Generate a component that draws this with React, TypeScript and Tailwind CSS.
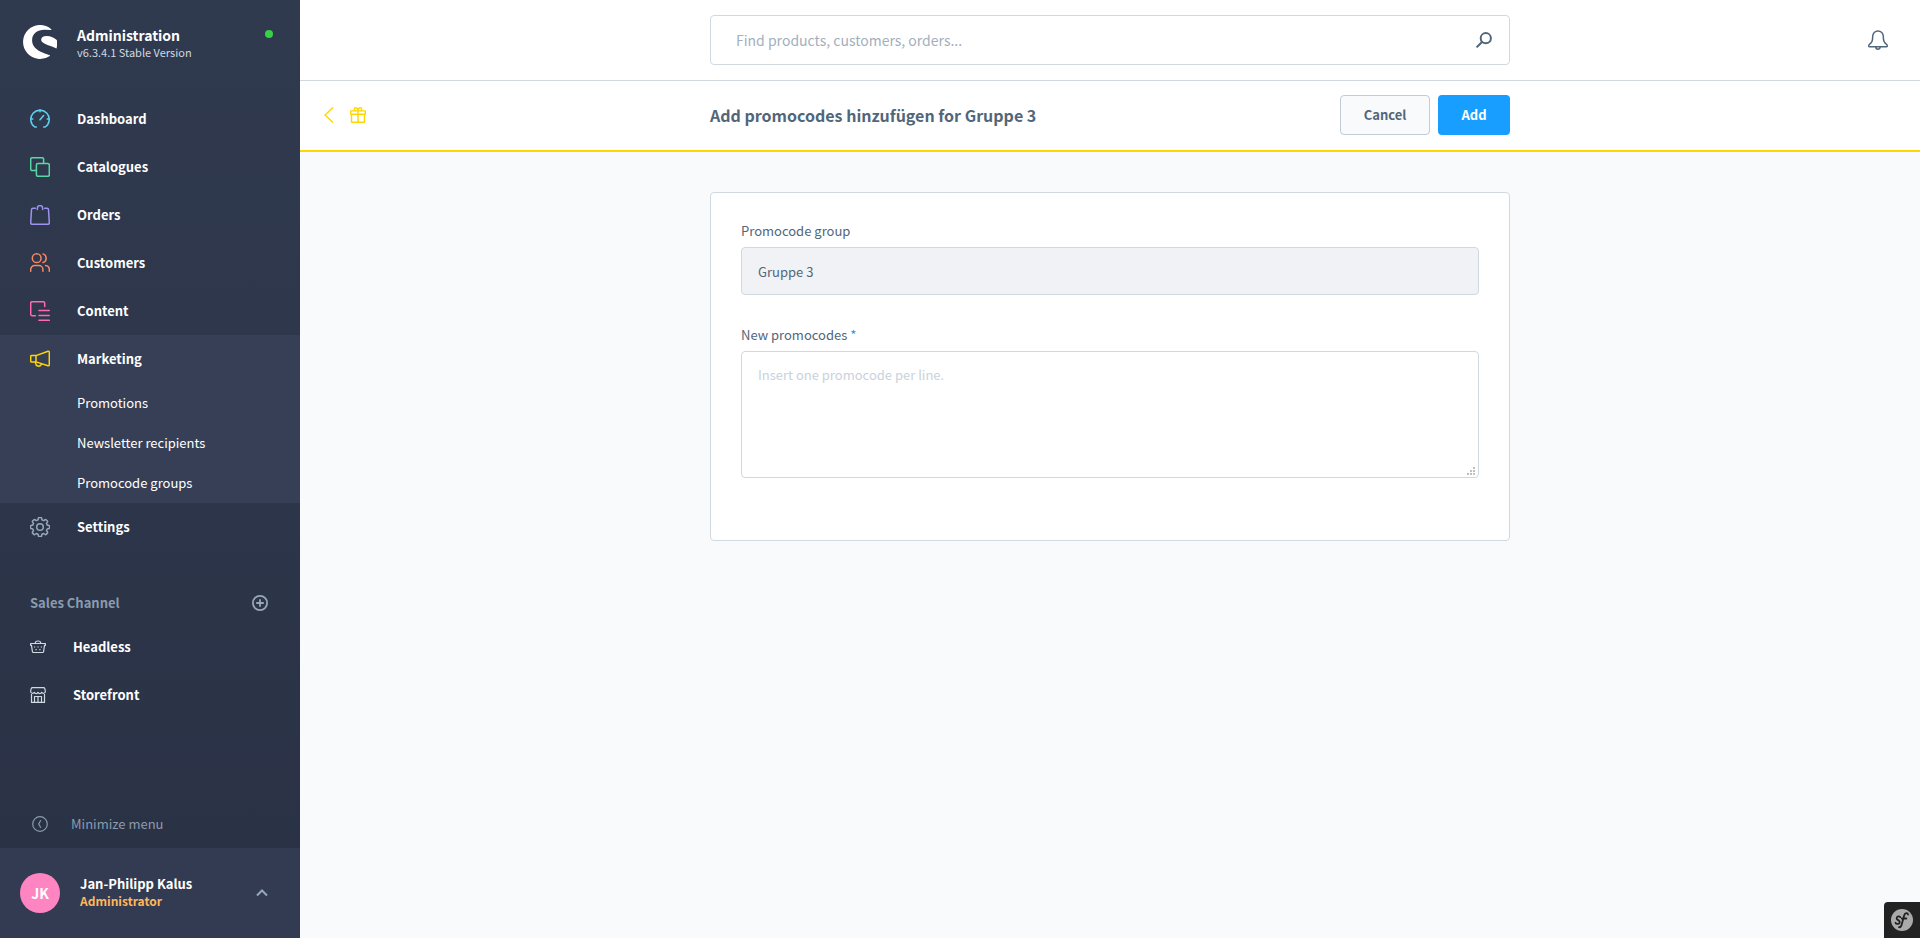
import { useState } from "react"
import type { ReactNode } from "react"

interface NavItem {
  label: string
  icon: ReactNode
  color: string
  children?: string[]
}

interface IconProps {
  size?: number
  children: ReactNode
}

function Icon({ size = 20, children }: IconProps) {
  return (
    <svg
      width={size}
      height={size}
      viewBox="0 0 20 20"
      fill="none"
      stroke="currentColor"
      strokeWidth="1.5"
      strokeLinecap="round"
      strokeLinejoin="round"
      aria-hidden="true"
      className="shrink-0"
    >
      {children}
    </svg>
  )
}

const navItems: NavItem[] = [
  {
    label: "Dashboard",
    color: "text-[#5fd0f0]",
    icon: (
      <Icon>
        <path d="M6.3 18H4.8A9.2 9.2 0 1 1 15.2 18H13.700" />
        <path d="M10 .8v2M.8 10h2M17.2 10h2M10 10.8l3.600-4.300" />
      </Icon>
    ),
  },
  {
    label: "Catalogues",
    color: "text-[#57d9a3]",
    icon: (
      <Icon>
        <path d="M6 13.600H2.200A1.500 1.500 0 0 1 .7 12.100V2.200A1.500 1.500 0 0 1 2.200.7h9.900a1.500 1.500 0 0 1 1.500 1.500V6" />
        <rect x="6.400" y="6.400" width="12.900" height="12.900" rx="1.500" />
      </Icon>
    ),
  },
  {
    label: "Orders",
    color: "text-[#a092f0]",
    icon: (
      <Icon>
        <path d="M5.300 3.300H3A1.500 1.500 0 0 0 1.500 4.800L.7 17.800a1.500 1.500 0 0 0 1.500 1.500h15.600a1.500 1.500 0 0 0 1.500-1.500L18.500 4.800A1.500 1.500 0 0 0 17 3.300h-2.300" />
        <path d="M7.300 4.600V3.300a2.700 2.700 0 0 1 5.400 0v1.300" />
      </Icon>
    ),
  },
  {
    label: "Customers",
    color: "text-[#f88962]",
    icon: (
      <Icon>
        <circle cx="6.700" cy="5.200" r="4.400" />
        <path d="M.7 18.300v-1.800a4 4 0 0 1 4-4h4.200a4 4 0 0 1 4 4v1.800M13 .9a4.500 4.500 0 0 1 0 8.600M15.600 12.600a4.200 4.200 0 0 1 3.700 4.200v1.500" />
      </Icon>
    ),
  },
  {
    label: "Content",
    color: "text-[#ff68b4]",
    icon: (
      <Icon>
        <path d="M5.400 14.700H2.200A1.500 1.500 0 0 1 .7 13.200v-11A1.500 1.500 0 0 1 2.200.7h11a1.500 1.500 0 0 1 1.500 1.500v3.200" />
        <path d="M9 9.500h10.300M9 14.500h10.300M9 19.300h10.300" />
      </Icon>
    ),
  },
  {
    label: "Marketing",
    color: "text-[#ffd700]",
    icon: (
      <Icon>
        <path d="M6 6.600 18 2.300a1 1 0 0 1 1.300.9v12.600a1 1 0 0 1-1.300.9L6 12.900ZM6 6.600H1.700a1 1 0 0 0-1 1v4.300a1 1 0 0 0 1 1H6M5.600 13v1.300a3 3 0 0 0 5.600 1.300v-.8" />
      </Icon>
    ),
    children: ["Promotions", "Newsletter recipients", "Promocode groups"],
  },
  {
    label: "Settings",
    color: "text-[#98a7b9]",
    icon: (
      <Icon>
        <path d="M8.100 2.900 8.400 1.100Q8.500.6 9 .6h2q.5 0 .6.500l.3 1.800 1.800.7 1.500-1q.5-.3.900.1l1.300 1.300q.4.400.1.900l-1 1.500.7 1.700 1.800.3q.5.100.5.600v2q0 .5-.5.600l-1.800.3-.7 1.800 1 1.500q.3.500-.1.900l-1.300 1.300q-.4.400-.9.100l-1.500-1-1.800.7-.3 1.800q-.1.500-.6.500H9q-.5 0-.6-.5l-.3-1.800-1.800-.7-1.500 1q-.5.300-.9-.1l-1.300-1.300q-.4-.4-.1-.9l1-1.500-.7-1.800-1.800-.3Q.5 11.500.5 11V9q0-.5.5-.6l1.800-.3.7-1.700-1-1.500q-.3-.5.1-.9l1.300-1.300q.4-.4.900-.1l1.500 1Z" />
        <circle cx="10" cy="10" r="3.300" />
      </Icon>
    ),
  },
]

const salesChannels = [
  {
    label: "Headless",
    icon: (
      <svg width="16" height="16" viewBox="0 0 16 16" fill="none" stroke="currentColor" strokeWidth="1.200" strokeLinejoin="round" aria-hidden="true">
        <path d="M.6 4.500h14.800v1.800h-.9l-.9 6.200q-.1 1-1.100 1h-9q-1 0-1.100-1L1.500 6.300H.6ZM5.300 4.500V4a2.700 2 0 0 1 5.400 0v.5" />
        <path d="M4 8h1.200M7.400 8h1.200M10.800 8H12M5.500 10.700h1.200M9.300 10.700h1.200" />
      </svg>
    ),
  },
  {
    label: "Storefront",
    icon: (
      <svg width="16" height="16" viewBox="0 0 16 16" fill="none" stroke="currentColor" strokeWidth="1.200" strokeLinejoin="round" aria-hidden="true">
        <path d="M1.500 7v8.400h13V7M2.500.6h11q1 0 1.300 1l.6 2.900a2 2 0 0 1-3.700.8 2 2 0 0 1-3.700 0 2 2 0 0 1-3.700 0A2 2 0 0 1 .6 4.500l.6-2.900q.3-1 1.300-1Z" />
        <path d="M4.500 15.400V9.500h7v5.900M8 9.500v5.900" />
      </svg>
    ),
  },
]

function Sidebar() {
  return (
    <aside className="flex w-[300px] shrink-0 flex-col bg-linear-to-b from-[#303a4f] to-[#2a3145] text-white">
      <div className="flex h-[95px] items-start pt-[25px] pr-[27px] pl-[23px]">
        <svg width="34" height="34" viewBox="0 0 34 34" fill="white" role="img" aria-label="Shopware" className="shrink-0">
          <path d="M28.300 4.200A17 17 0 1 0 26.800 30.900q.5-.4 0-.6C20 27.700 9.100 24.700 9.100 15.200 9.100 8.500 14.500 4.800 21.300 4.800q3.500 0 6.700.2.900-.2.300-.8Z" />
          <path d="M33.800 15c-2.500-2.300-5.800-4-10.300-4-3.500 0-5.300 1.500-5.300 3.700 0 4.100 7.600 5 14.700 8.600q.7.300.8-.5c.5-2.800.6-5 .1-7.800Z" />
        </svg>
        <div className="ml-5 flex-1 pt-px">
          <div className="text-sm leading-[18px] font-bold">Administration</div>
          <div className="text-[11px] leading-4 text-[#d1d9e0]">v6.3.4.1 Stable Version</div>
        </div>
        <span className="mt-[5px] size-2 rounded-full bg-[#37d046]" />
      </div>

      <nav className="text-[13px]">
        <ul>
          {navItems.map((item) => (
            <li key={item.label} className={item.children ? "bg-[#373f57]" : ""}>
              <a href="#" className="flex h-12 items-center gap-[27px] pl-[30px] font-bold">
                <span className={item.color}>{item.icon}</span>
                {item.label}
              </a>
              {item.children && (
                <ul>
                  {item.children.map((child) => (
                    <li key={child}>
                      <a href="#" className="flex h-10 items-center pl-[77px]">{child}</a>
                    </li>
                  ))}
                </ul>
              )}
            </li>
          ))}
        </ul>

        <div className="mt-8 flex h-10 items-center justify-between pr-8 pl-[30px] font-bold text-[#8a9bae]">
          Sales Channel
          <button type="button" aria-label="Add sales channel">
            <svg width="16" height="16" viewBox="0 0 16 16" fill="none" stroke="#98a7b9" strokeWidth="1.800" aria-hidden="true">
              <circle cx="8" cy="8" r="7.100" />
              <path d="M8 4.200v7.600M4.200 8h7.600" />
            </svg>
          </button>
        </div>
        <ul>
          {salesChannels.map((channel) => (
            <li key={channel.label}>
              <a href="#" className="flex h-12 items-center gap-[27px] pl-[30px] font-bold">
                <span className="text-[#d1d9e0]">{channel.icon}</span>
                {channel.label}
              </a>
            </li>
          ))}
        </ul>
      </nav>

      <button type="button" className="mt-auto flex h-12 items-center gap-[23px] pl-8 text-[13px] text-[#8a9bae]">
        <svg width="16" height="16" viewBox="0 0 16 16" fill="none" stroke="currentColor" strokeWidth="1.200" aria-hidden="true">
          <circle cx="8" cy="8" r="7.300" />
          <path d="M8.800 4.300 6.700 8l2.100 3.700" />
        </svg>
        Minimize menu
      </button>

      <button type="button" className="flex h-[90px] items-center bg-[#333b52] pr-8 pl-5 text-left">
        <span className="flex size-10 items-center justify-center rounded-full bg-[#ff85c2] text-sm font-bold">JK</span>
        <span className="ml-5 flex-1 pb-0.5 font-bold">
          <span className="block text-[13px] leading-[17px]">Jan-Philipp Kalus</span>
          <span className="block text-xs leading-[17px] text-[#ffb75d]">Administrator</span>
        </span>
        <svg width="12" height="8" viewBox="0 0 12 8" fill="none" stroke="#98a7b9" strokeWidth="2" aria-hidden="true">
          <path d="m1 6.500 5-5 5 5" />
        </svg>
      </button>
    </aside>
  )
}

function SearchBar() {
  return (
    <header className="grid h-[81px] grid-cols-[1fr_minmax(0,800px)_1fr] items-center border-b border-[#d1d9e0] bg-white">
      <label className="col-start-2 flex h-[50px] items-center rounded border border-[#d1d9e0] pr-[17px] pl-[25px]">
        <input
          type="search"
          aria-label="Search"
          placeholder="Find products, customers, orders..."
          className="min-w-0 flex-1 text-sm outline-none placeholder:text-[#a3afbd]"
        />
        <svg width="16" height="16" viewBox="0 0 16 16" fill="none" stroke="#52667a" strokeWidth="2" strokeLinecap="round" aria-hidden="true">
          <circle cx="9.800" cy="6.200" r="5.100" />
          <path d="M6 10 1.200 14.800" />
        </svg>
      </label>
      <button type="button" aria-label="Notifications" className="mr-8 justify-self-end text-[#52667a]">
        <Icon>
          <path d="M4.700 6.200a5.300 5.300 0 0 1 10.600 0c0 5 .8 6.400 3.500 8.400q1.300 2-.6 2.100H1.800q-1.900-.1-.6-2.100C3.900 12.600 4.700 11.200 4.700 6.200ZM7.800 17a2.200 2.200 0 0 0 4.400 0" />
        </Icon>
      </button>
    </header>
  )
}

function SmartBar() {
  return (
    <div className="grid h-[71px] grid-cols-[1fr_minmax(0,800px)_1fr] items-center border-b-2 border-[#ffd700] bg-white pb-px">
      <div className="flex items-center gap-4 pl-6 text-[#ffd700]">
        <a href="#" aria-label="Back">
          <svg width="10" height="16" viewBox="0 0 10 16" fill="none" stroke="currentColor" strokeWidth="1.500" aria-hidden="true">
            <path d="M9 .5 1 8l8 7.500" />
          </svg>
        </a>
        <svg width="16" height="16" viewBox="0 0 16 16" fill="none" stroke="currentColor" strokeWidth="1.400" strokeLinejoin="round" aria-hidden="true">
          <path d="M.7 3.900h14.600v3.300H.7ZM1.500 7.200h13v8.100h-13ZM8 3.900v11.400" />
          <path d="M8 3.800C7.800 1.800 6.900.7 5.700.7 3.900.7 3.900 3.800 5.500 3.800M8 3.800C8.200 1.800 9.100.7 10.300.7c1.800 0 1.800 3.100.2 3.100" />
        </svg>
      </div>
      <div className="flex items-center justify-between">
        <h1 className="text-base font-bold text-[#52667a]">Add promocodes hinzufügen for Gruppe 3</h1>
        <div className="flex gap-2 text-[13px] font-bold">
          <button type="button" className="h-10 w-[90px] rounded border border-[#c2cbd8] bg-[#f9fafb] text-[#52667a]">
            Cancel
          </button>
          <button type="submit" form="promocode-form" className="h-10 w-[72px] rounded bg-[#189eff] text-white">
            Add
          </button>
        </div>
      </div>
    </div>
  )
}

function PromocodeForm() {
  const [codes, setCodes] = useState("")

  return (
    <form
      id="promocode-form"
      onSubmit={(e) => e.preventDefault()}
      className="w-full max-w-[800px] rounded border border-[#d1d9e0] bg-white px-[30px] pt-[30px] pb-[62px] text-[13px] text-[#52667a]"
    >
      <label htmlFor="group" className="mb-2 block leading-4">Promocode group</label>
      <input
        id="group"
        value="Gruppe 3"
        disabled
        className="block h-12 w-full rounded border border-[#d1d9e0] bg-[#f0f2f5] px-4"
      />

      <label htmlFor="codes" className="mt-8 mb-2 block leading-4">
        New promocodes <span className="text-[#189eff]">*</span>
      </label>
      <div className="relative">
        <textarea
          id="codes"
          value={codes}
          onChange={(e) => setCodes(e.target.value)}
          placeholder="Insert one promocode per line."
          className="block h-[127px] w-full resize-none rounded border border-[#d1d9e0] px-4 py-3 leading-[22px] outline-none placeholder:text-[#c9d2dc]"
        />
        {/* dotted grip */}
        <svg width="8" height="8" viewBox="0 0 8 8" fill="#bfbfbf" aria-hidden="true" className="pointer-events-none absolute right-1 bottom-[3px]">
          <path d="M6 0h2v2H6ZM3 3h2v2H3ZM6 3h2v2H6ZM0 6h2v2H0ZM3 6h2v2H3ZM6 6h2v2H6Z" />
        </svg>
      </div>
    </form>
  )
}

export default function App() {
  return (
    <div className="flex min-h-screen bg-[#f9fafc] font-['Noto_Sans_CJK_SC','Open_Sans',sans-serif]">
      <Sidebar />
      <div className="flex min-w-0 flex-1 flex-col">
        <SearchBar />
        <SmartBar />
        <main className="flex justify-center pt-10">
          <PromocodeForm />
        </main>
      </div>

      <button type="button" aria-label="Symfony toolbar" className="fixed right-0 bottom-0 flex h-9 w-9 items-center justify-center rounded-tl bg-[#222]">
        <svg width="22" height="22" viewBox="0 0 22 22" aria-hidden="true">
          <circle cx="11" cy="11" r="11" fill="#aaa" />
          <g fill="none" stroke="#222" strokeWidth="1.800" strokeLinecap="round">
            <path d="M9.300 8.200C8.800 6.700 5.600 7.200 5.600 9.200c0 2 3.500 1.900 3.200 4.100-.3 2-3.600 2.100-4.300.5" />
            <path d="M17 5.500c-.2-1.800-2.900-2-3.800.7L10.700 15.600c-.5 2-1.500 2.900-2.700 2.600M10.800 9.500h4.500" />
          </g>
        </svg>
      </button>
    </div>
  )
}
